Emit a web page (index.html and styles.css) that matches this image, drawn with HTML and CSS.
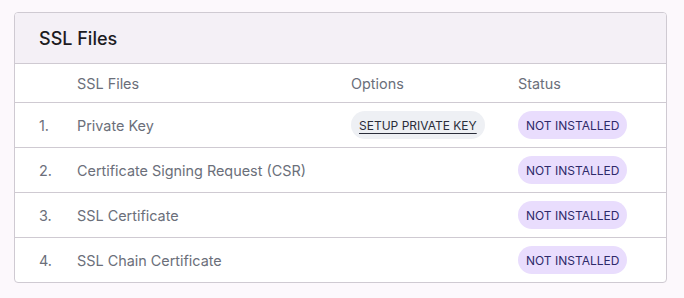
FILE: index.html
```html
<!DOCTYPE html>
<html>
<head>
<meta charset="utf-8">
<link rel="stylesheet" href="styles.css">
</head>
<body>
<div class="card">
  <div class="card-header">SSL Files</div>
  <table class="ssl-table">
    <thead>
      <tr>
        <th class="col-num"></th>
        <th class="col-name">SSL Files</th>
        <th class="col-opt">Options</th>
        <th class="col-status">Status</th>
      </tr>
    </thead>
    <tbody>
      <tr>
        <td class="col-num">1.</td>
        <td class="col-name">Private Key</td>
        <td class="col-opt"><a class="pill pill-action" href="#">SETUP PRIVATE KEY</a></td>
        <td class="col-status"><span class="pill pill-status">NOT INSTALLED</span></td>
      </tr>
      <tr>
        <td class="col-num">2.</td>
        <td class="col-name">Certificate Signing Request (CSR)</td>
        <td class="col-opt"></td>
        <td class="col-status"><span class="pill pill-status">NOT INSTALLED</span></td>
      </tr>
      <tr>
        <td class="col-num">3.</td>
        <td class="col-name">SSL Certificate</td>
        <td class="col-opt"></td>
        <td class="col-status"><span class="pill pill-status">NOT INSTALLED</span></td>
      </tr>
      <tr>
        <td class="col-num">4.</td>
        <td class="col-name">SSL Chain Certificate</td>
        <td class="col-opt"></td>
        <td class="col-status"><span class="pill pill-status">NOT INSTALLED</span></td>
      </tr>
    </tbody>
  </table>
</div>
</body>
</html>
```

FILE: styles.css
```css
html, body {
  margin: 0;
  padding: 0;
}
body {
  background: #fcf8fc;
  font-family: Inter, "Noto Sans", sans-serif;
  padding: 12px 17px 0 14px;
}
.card {
  background: #ffffff;
  border: 1px solid #cfcad2;
  border-radius: 4px;
  overflow: hidden;
}
.card-header {
  background: #f4f0f6;
  height: 51px;
  border-bottom: 1px solid #cfcad2;
  box-sizing: border-box;
  display: flex;
  align-items: center;
  padding-left: 24px;
  font-size: 18px;
  font-weight: 500;
  color: #1c1b1f;
}
.ssl-table {
  width: 100%;
  border-collapse: collapse;
  font-size: 14.4px;
  color: #6b6f7a;
}
.ssl-table th {
  font-weight: 400;
  text-align: left;
  height: 38px;
  padding: 0;
  border-bottom: 1px solid #cfcad2;
}
.ssl-table td {
  height: 44px;
  padding: 0;
  border-bottom: 1px solid #cfcad2;
}
.ssl-table tbody tr:last-child td {
  border-bottom: none;
}
.col-num {
  width: 38px;
  padding-left: 24px !important;
}
.col-name {
  width: 274px;
}
.col-opt {
  width: 167px;
}
.pill {
  display: inline-flex;
  align-items: center;
  height: 28px;
  padding: 0 8px;
  border-radius: 14px;
  font-size: 12px;
  font-weight: 400;
  box-sizing: border-box;
}
.pill-action {
  background: #eef0f4;
  color: #2a2d3a;
  text-decoration: underline;
  text-underline-offset: 3px;
}
.pill-status {
  background: #e9ddfd;
  color: #2e2a6a;
}
```
